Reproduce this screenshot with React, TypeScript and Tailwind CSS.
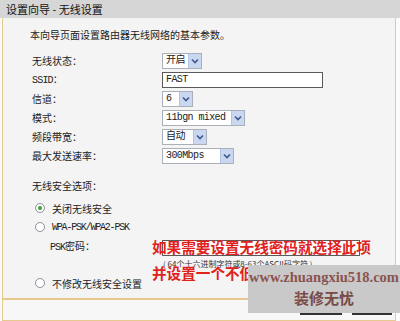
import React from 'react';

const cjk = { fontFamily: '"Noto Sans CJK SC", "Liberation Sans", sans-serif' };

const Select = ({ value, width }: { value: string; width: string }) => (
  <div className={`flex h-[16px] items-stretch border border-[#a9b0ba] bg-white ${width}`}>
    <span className="flex-1 pl-[3px] text-[10px] leading-[14px] text-[#222] font-['Liberation_Mono','Noto_Sans_CJK_SC',monospace] tracking-[-0.6px] whitespace-nowrap overflow-hidden">
      {value}
    </span>
    <span className="flex w-[13px] items-center justify-center bg-[#c9d7f1] border-l border-[#b4c4e4]">
      <svg width="8" height="6" viewBox="0 0 8 6">
        <path d="M1 1.5 L4 4.5 L7 1.5" stroke="#3d5a8c" strokeWidth="1.6" fill="none" />
      </svg>
    </span>
  </div>
);

const Radio = ({ checked }: { checked?: boolean }) => (
  <span className="flex h-[10px] w-[10px] items-center justify-center rounded-full border border-[#8a9099] bg-white">
    {checked && <span className="h-[4px] w-[4px] rounded-full bg-[#3aa63a]" />}
  </span>
);

const App = () => {
  const rows: { label: string; control: React.ReactNode; latin?: boolean }[] = [
    { label: '无线状态：', control: <Select value="开启" width="w-[40px]" /> },
    {
      label: 'SSID：',
      latin: true,
      control: (
        <div className="h-[16px] w-[161px] border border-[#5a5a5a] bg-white pl-[3px] text-[10px] leading-[14px] text-[#222] font-['Liberation_Mono',monospace] tracking-[-0.6px]">
          FAST
        </div>
      ),
    },
    { label: '信道：', control: <Select value="6" width="w-[31px]" /> },
    { label: '模式：', control: <Select value="11bgn mixed" width="w-[83px]" /> },
    { label: '频段带宽：', control: <Select value="自动" width="w-[45px]" /> },
    { label: '最大发送速率：', control: <Select value="300Mbps" width="w-[72px]" /> },
  ];

  return (
    <div className="relative h-[321px] w-[400px] overflow-hidden bg-[#fbfbfb] text-[#222]" style={cjk}>
      {/* title bar */}
      <div className="flex h-[18px] items-center bg-[#d6d6d6] pl-[6px] text-[11px] text-[#111]">
        设置向导 - 无线设置
      </div>

      {/* main panel */}
      <div className="ml-[2px] h-[281px] w-[394px] border-x border-b border-[#e6c98e] bg-[#f4f4f4]">
        <div className="pl-[27px] pt-[10px] text-[10px] leading-[14px]">本向导页面设置路由器无线网络的基本参数。</div>

        <div className="mt-[9px] flex flex-col">
          {rows.map((r) => (
            <div key={r.label} className="grid h-[19px] grid-cols-[130px_1fr] items-center pl-[29px]">
              <span className="text-[10px] leading-[14px]">
                {r.latin ? (
                  <>
                    <span className="font-['Liberation_Mono',monospace] tracking-[-0.8px]">SSID</span>：
                  </>
                ) : (
                  r.label
                )}
              </span>
              <div>{r.control}</div>
            </div>
          ))}
        </div>

        <div className="mt-[14px] pl-[29px] text-[10px] leading-[14px]">无线安全选项：</div>

        <div className="mt-[6px] flex h-[18px] items-center pl-[32px]">
          <Radio checked />
          <span className="ml-[7px] text-[10px]">关闭无线安全</span>
        </div>
        <div className="mt-[1px] flex h-[18px] items-center pl-[32px]">
          <Radio />
          <span className="ml-[7px] text-[10px] font-['Liberation_Mono',monospace] tracking-[-1.2px]">WPA-PSK/WPA2-PSK</span>
        </div>
        <div className="grid h-[18px] grid-cols-[112px_1fr] items-center pl-[47px]">
          <span className="text-[10px]">
            <span className="font-['Liberation_Mono',monospace] tracking-[-1px]">PSK</span>密码：
          </span>
          <div className="mt-[4px] h-[16px] w-[198px] border border-[#5a5a5a] bg-white" />
        </div>
        <div className="mt-[1px] flex h-[18px] items-center pl-[160px] text-[8px] text-[#333] whitespace-nowrap">
          ( 64个十六进制字符或8-63个ASCII码字符 )
        </div>
        <div className="mt-[1px] flex h-[18px] items-center pl-[32px]">
          <Radio />
          <span className="ml-[7px] text-[10px]">不修改无线安全设置</span>
        </div>
      </div>

      {/* bottom button bar */}
      <div className="ml-[2px] flex h-[22px] w-[394px] items-start justify-end gap-[10px] border-x border-y border-[#e6c98e] bg-[#f7f7f7] pr-[3px] pt-[1px]">
        <div className="h-[14px] w-[42px] border-b-2 border-r border-[#333] bg-[#eeeeee]" />
        <div className="h-[14px] w-[40px] border-b-2 border-r border-[#333] bg-[#eeeeee]" />
      </div>

      {/* red annotation */}
      <div className="absolute left-[152px] top-[238px] text-[14.6px] font-bold leading-[18px] text-[#e0221c] whitespace-nowrap">
        如果需要设置无线密码就选择此项
      </div>
      <div className="absolute left-[152px] top-[264px] text-[14.6px] font-bold leading-[18px] text-[#e0221c] whitespace-nowrap">
        并设置一个不低于八位的密码
      </div>

      {/* watermark */}
      <div className="absolute left-[248px] top-[265px] flex h-[48px] w-[152px] flex-col items-center bg-[#c9c9c9]">
        <span className="mt-[3px] text-[14.5px] leading-[18px] text-[#8a5450] font-['Liberation_Serif',serif] font-bold">
          www.zhuangxiu518.com
        </span>
        <span className="mt-[2px] text-[15px] font-bold leading-[20px] text-[#7a4a46]">装修无忧</span>
      </div>
    </div>
  );
};

export default App;
